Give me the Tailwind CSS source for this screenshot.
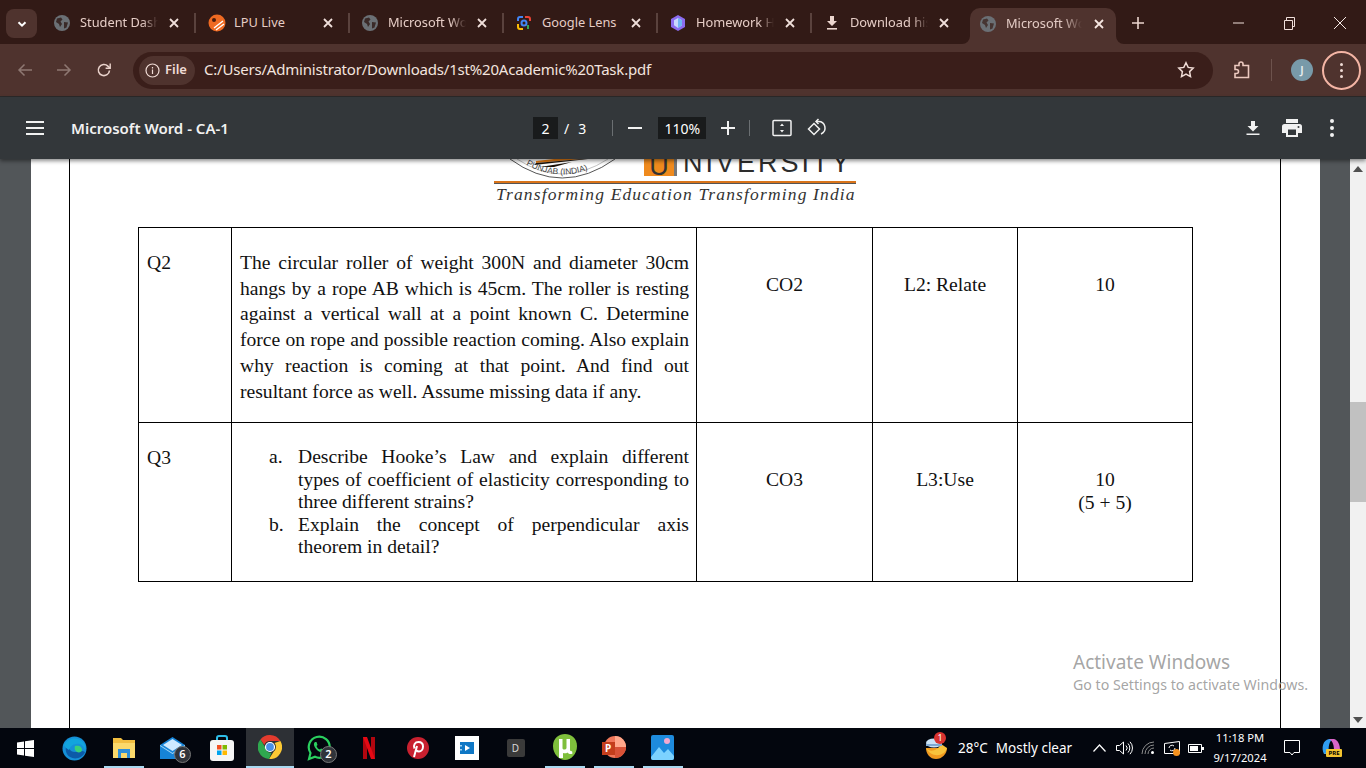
<!DOCTYPE html>
<html lang="en">
<head>
<meta charset="UTF-8">
<title>Microsoft Word - CA-1</title>
<script src="https://cdn.jsdelivr.net/npm/@tailwindcss/browser@4"></script>
</head>
<body class="w-[1366px] h-[768px] overflow-hidden flex flex-col bg-[#525659] font-['Noto_Sans',sans-serif]">

<!-- tab strip -->
<div class="h-[44px] shrink-0 bg-[#321a16] flex items-start text-[12.800px] text-[#e6cdc6] *:shrink-0">
  <div class="w-[31px] h-[29px] ml-[6px] mt-[9px] mr-[4px] rounded-lg bg-[#4f332e] flex items-center justify-center">
    <svg width="12" height="12" viewBox="0 0 12 12" fill="none" stroke="#fff" stroke-width="2"><path d="M2.500 4.200 6 7.700l3.500-3.500"/></svg>
  </div>

  <div class="w-[154px] h-[44px] flex items-center pl-[13px] pt-[2px] relative">
    <svg width="16" height="16" viewBox="0 0 16 16" class="shrink-0"><circle cx="8" cy="8" r="8" fill="#6b7075"/><path d="M3 3.500 7 2.500l1.500 2-2 2 1.500 2.500-2 3-1-3-3-2zM10 7l4 .5-1.500 5-2.500 1z" fill="#3a2a28"/></svg>
    <span class="ml-[10px] w-[78px] overflow-hidden whitespace-nowrap [mask-image:linear-gradient(90deg,#000_80%,transparent)]">Student Dashboard</span>
    <svg width="10" height="10" viewBox="0 0 10 10" class="ml-[11px]" stroke="#f0dfda" stroke-width="1.800"><path d="M1 1l8 8M9 1l-8 8"/></svg>
    <div class="absolute right-[-1px] top-[13px] w-[2px] h-[20px] bg-[#5a423d]"></div>
  </div>
  <div class="w-[154px] h-[44px] flex items-center pl-[13px] pt-[2px] relative">
    <svg width="18" height="18" viewBox="0 0 18 18" class="shrink-0"><circle cx="9" cy="9" r="8.500" fill="#ef6a22"/><path d="M6 14 15 7M8 16l8-6" stroke="#fff" stroke-width="1.400"/><circle cx="6" cy="6" r="2" fill="#4a1c0c"/></svg>
    <span class="ml-[8px] w-[89px] whitespace-nowrap">LPU Live</span>
    <svg width="10" height="10" viewBox="0 0 10 10" stroke="#f0dfda" stroke-width="1.800"><path d="M1 1l8 8M9 1l-8 8"/></svg>
    <div class="absolute right-[-1px] top-[13px] w-[2px] h-[20px] bg-[#5a423d]"></div>
  </div>
  <div class="w-[154px] h-[44px] flex items-center pl-[13px] pt-[2px] relative">
    <svg width="16" height="16" viewBox="0 0 16 16" class="shrink-0"><circle cx="8" cy="8" r="8" fill="#6b7075"/><path d="M3 3.500 7 2.500l1.500 2-2 2 1.500 2.500-2 3-1-3-3-2zM10 7l4 .5-1.500 5-2.500 1z" fill="#3a2a28"/></svg>
    <span class="ml-[10px] w-[78px] overflow-hidden whitespace-nowrap [mask-image:linear-gradient(90deg,#000_80%,transparent)]">Microsoft Word</span>
    <svg width="10" height="10" viewBox="0 0 10 10" class="ml-[11px]" stroke="#f0dfda" stroke-width="1.800"><path d="M1 1l8 8M9 1l-8 8"/></svg>
    <div class="absolute right-[-1px] top-[13px] w-[2px] h-[20px] bg-[#5a423d]"></div>
  </div>
  <div class="w-[154px] h-[44px] flex items-center pl-[13px] pt-[2px] relative">
    <svg width="16" height="16" viewBox="0 0 16 16" fill="none" stroke-width="2" class="shrink-0"><path d="M2 6V4a2 2 0 0 1 2-2h3" stroke="#4285f4"/><path d="M9 2h3a2 2 0 0 1 2 2v2" stroke="#ea4335"/><path d="M2 9v3a2 2 0 0 0 2 2h3" stroke="#fbbc04"/><path d="M12 10v4" stroke="#34a853"/><circle cx="8" cy="8" r="2.500" stroke="#4285f4"/></svg>
    <span class="ml-[10px] w-[89px] whitespace-nowrap">Google Lens</span>
    <svg width="10" height="10" viewBox="0 0 10 10" stroke="#f0dfda" stroke-width="1.800"><path d="M1 1l8 8M9 1l-8 8"/></svg>
    <div class="absolute right-[-1px] top-[13px] w-[2px] h-[20px] bg-[#5a423d]"></div>
  </div>
  <div class="w-[154px] h-[44px] flex items-center pl-[13px] pt-[2px] relative">
    <svg width="16" height="16" viewBox="0 0 16 16" class="shrink-0"><path d="M8 0l7 4v8l-7 4-7-4V4z" fill="#8b6cf0"/><path d="M8 3l4 2.300v5L8 13l-4-2.700v-5z" fill="#c9d8ff"/><path d="M8 3v10l4-2.700v-5z" fill="#6fb6f5"/></svg>
    <span class="ml-[10px] w-[78px] overflow-hidden whitespace-nowrap [mask-image:linear-gradient(90deg,#000_80%,transparent)]">Homework Help</span>
    <svg width="10" height="10" viewBox="0 0 10 10" class="ml-[11px]" stroke="#f0dfda" stroke-width="1.800"><path d="M1 1l8 8M9 1l-8 8"/></svg>
    <div class="absolute right-[-1px] top-[13px] w-[2px] h-[20px] bg-[#5a423d]"></div>
  </div>
  <div class="w-[154px] h-[44px] flex items-center pl-[13px] pt-[2px]">
    <svg width="16" height="16" viewBox="0 0 16 16" fill="#ecd5ce" class="shrink-0"><path d="M6 1h4v5h3L8 11 3 6h3z"/><path d="M3 13h10v1.600H3z"/></svg>
    <span class="ml-[10px] w-[78px] overflow-hidden whitespace-nowrap [mask-image:linear-gradient(90deg,#000_80%,transparent)]">Download history</span>
    <svg width="10" height="10" viewBox="0 0 10 10" class="ml-[11px]" stroke="#f0dfda" stroke-width="1.800"><path d="M1 1l8 8M9 1l-8 8"/></svg>
  </div>
  <div class="relative w-[146px] h-[36px] mt-[8px] ml-[5px] rounded-t-[10px] bg-[#4f332e] flex items-center pl-[10px] pb-[4px] text-[#e3cbc4]">
    <svg width="8" height="8" viewBox="0 0 8 8" class="absolute left-[-8px] bottom-0"><path d="M8 0v8H0a8 8 0 0 0 8-8z" fill="#4f332e"/></svg>
    <svg width="8" height="8" viewBox="0 0 8 8" class="absolute right-[-8px] bottom-0"><path d="M0 0v8h8a8 8 0 0 1-8-8z" fill="#4f332e"/></svg>
    <svg width="16" height="16" viewBox="0 0 16 16" class="shrink-0"><circle cx="8" cy="8" r="8" fill="#6b7075"/><path d="M3 3.500 7 2.500l1.500 2-2 2 1.500 2.500-2 3-1-3-3-2zM10 7l4 .5-1.500 5-2.500 1z" fill="#463532"/></svg>
    <span class="ml-[10px] w-[76px] overflow-hidden whitespace-nowrap [mask-image:linear-gradient(90deg,#000_75%,transparent)]">Microsoft Word</span>
    <svg width="10" height="10" viewBox="0 0 10 10" class="ml-[12px]" stroke="#f6e6e1" stroke-width="1.800"><path d="M1 1l8 8M9 1l-8 8"/></svg>
  </div>
  <svg width="12" height="12" viewBox="0 0 12 12" class="ml-[16px] mt-[17px]" stroke="#ecd5ce" stroke-width="1.600"><path d="M6 0v12M0 6h12"/></svg>
  <div class="ml-auto h-[44px] flex items-center pt-[2px]">
    <svg width="12" height="12" viewBox="0 0 12 12"><path d="M1 6h11" stroke="#f0dfda" stroke-width="1"/></svg>
    <svg width="13" height="13" viewBox="0 0 13 13" fill="none" stroke="#f0dfda" class="ml-[39px]"><path d="M1.500 3.500h8v9h-8zM3.500 3.500v-3h8v9h-2"/></svg>
    <svg width="14" height="14" viewBox="0 0 14 14" class="ml-[37px] mr-[19px]" stroke="#f5e8e4" stroke-width="1"><path d="M1 1l12 12M13 1 1 13"/></svg>
  </div>
</div>

<!-- address bar -->
<div class="h-[52px] shrink-0 bg-[#4f332e] flex items-center text-[#e9d2cb]">
  <svg width="16" height="14" viewBox="0 0 16 14" fill="none" stroke="#8e7872" stroke-width="1.500" class="ml-[17px]"><path d="M15 7H2M7.500 1.500 2 7l5.500 5.500"/></svg>
  <svg width="16" height="14" viewBox="0 0 16 14" fill="none" stroke="#8e7872" stroke-width="1.500" class="ml-[23px]"><path d="M1 7h13M8.500 1.500 14 7l-5.500 5.500"/></svg>
  <svg width="16" height="16" viewBox="0 0 16 16" fill="none" stroke="#e9d2cb" stroke-width="1.600" class="ml-[24px]"><path d="M13.500 8.500a5.600 5.600 0 1 1-1.600-4.400L14 6"/><path d="M14.200 1.500V6.200H9.600" stroke-width="1.400"/></svg>
  <div class="ml-[21px] w-[1080px] h-[37px] rounded-full bg-[#3a1e1a] flex items-center pl-[6px]">
    <div class="w-[56px] h-[29px] rounded-full bg-[#4f332e] flex items-center pl-[6px] gap-[5px] text-[13px] font-semibold text-[#f0dcd6]">
      <svg width="15" height="15" viewBox="0 0 15 15" fill="none" stroke="#f0dcd6" stroke-width="1.200"><circle cx="7.500" cy="7.500" r="6.500"/><path d="M7.500 6.500v4.500M7.500 4v1.500"/></svg>
      <span>File</span>
    </div>
    <span class="ml-[9px] mb-[1px] text-[15px] text-[#f3e4df] whitespace-nowrap tracking-[-0.2px]">C:/Users/Administrator/Downloads/1st%20Academic%20Task.pdf</span>
    <svg width="18" height="18" viewBox="0 0 18 18" fill="none" stroke="#f0dcd6" stroke-width="1.500" class="ml-auto mr-[18px]"><path d="M9 1.800l2.200 4.600 5 .7-3.600 3.500.9 5L9 13.200l-4.500 2.400.9-5L1.800 7.100l5-.7z"/></svg>
  </div>
  <svg width="18" height="18" viewBox="0 0 18 18" fill="none" stroke="#ecc9bf" stroke-width="1.600" class="ml-[20px]"><path d="M2 4.500h4V3a2 2 0 0 1 4 0v1.500h5.500v12H2v-4h1.500a2 2 0 0 0 0-4H2z"/></svg>
  <div class="ml-[20px] w-px h-[22px] bg-[#6d534d]"></div>
  <div class="ml-[19px] w-[22px] h-[22px] rounded-full bg-[#789aa9] flex items-center justify-center text-[11px] font-semibold text-[#e8eef0]">J</div>
  <div class="ml-[9px] w-[39px] h-[39px] rounded-full border-2 border-[#f4b5a5] flex flex-col items-center justify-center gap-[3px]">
    <i class="block w-[3px] h-[3px] rounded-full bg-[#f0dcd6]"></i><i class="block w-[3px] h-[3px] rounded-full bg-[#f0dcd6]"></i><i class="block w-[3px] h-[3px] rounded-full bg-[#f0dcd6]"></i>
  </div>
</div>
<div class="h-px shrink-0 bg-[#2c2a2a]"></div>

<!-- pdf toolbar -->
<div class="relative z-10 h-[62px] shrink-0 bg-[#33373a] flex items-center text-white shadow-[0_2px_4px_rgba(0,0,0,0.45)]">
  <svg width="18" height="14" viewBox="0 0 18 14" fill="#f1f1f1" class="ml-[26px]"><path d="M0 0h18v2H0zM0 6h18v2H0zM0 12h18v2H0z"/></svg>
  <span class="ml-[27px] w-[462px] text-[15px] font-semibold text-[#f1f1f1]">Microsoft Word - CA-1</span>
  <div class="w-[25px] h-[22px] bg-[#191b1c] flex items-center justify-center text-[14px]">2</div>
  <span class="ml-[6px] text-[14px]">/</span>
  <span class="ml-[9px] text-[14px]">3</span>
  <div class="ml-[26px] w-px h-[16px] bg-[#6b6f72]"></div>
  <svg width="14" height="14" viewBox="0 0 14 14" fill="#f1f1f1" class="ml-[15px]"><path d="M0 6h14v2H0z"/></svg>
  <div class="ml-[16px] w-[48px] h-[22px] bg-[#191b1c] flex items-center justify-center text-[14px]">110%</div>
  <svg width="14" height="14" viewBox="0 0 14 14" fill="#f1f1f1" class="ml-[15px]"><path d="M6 0h2v6h6v2H8v6H6V8H0V6h6z"/></svg>
  <div class="ml-[14px] w-px h-[16px] bg-[#6b6f72]"></div>
  <svg width="20" height="18" viewBox="0 0 20 18" fill="none" stroke="#f1f1f1" stroke-width="1.500" class="ml-[22px]"><rect x="1" y="1.500" width="18" height="15" rx="1"/><path d="M10 4.500 8 7h4zM10 13.500 8 11h4z" fill="#f1f1f1" stroke="none"/></svg>
  <svg width="20" height="20" viewBox="0 0 20 20" fill="none" stroke="#f1f1f1" stroke-width="1.500" class="ml-[15px]"><path d="M1.500 11 7 5.500l5.500 5.500L7 16.500z"/><path d="M9 3.500h2.500a6.500 6.500 0 0 1 2.500 12.500"/><path d="M11.500 1 9 3.500 11.500 6"/></svg>
  <svg width="16" height="16" viewBox="0 0 16 16" fill="#f1f1f1" class="ml-[418px]"><path d="M6 1h4v5h3.500L8 11.500 2.500 6H6zM1.500 13.500h13V15h-13z"/></svg>
  <svg width="20" height="18" viewBox="0 0 20 18" class="ml-[21px]"><path d="M4 0h12v4H4zM2.500 5h15A2.500 2.500 0 0 1 20 7.500V14h-4v4H4v-4H0V7.500A2.500 2.500 0 0 1 2.500 5z" fill="#f1f1f1"/><path d="M6 10.500h8V16H6z" fill="#33373a"/><circle cx="16.500" cy="8" r="1" fill="#33373a"/></svg>
  <div class="ml-[28px] flex flex-col gap-[3px]"><i class="block w-[4px] h-[4px] rounded-full bg-[#f1f1f1]"></i><i class="block w-[4px] h-[4px] rounded-full bg-[#f1f1f1]"></i><i class="block w-[4px] h-[4px] rounded-full bg-[#f1f1f1]"></i></div>
</div>

<!-- pdf viewport -->
<div class="relative h-[569px] shrink-0 flex overflow-hidden bg-[#525659]">
  <div class="ml-[31px] w-[1289px] h-full bg-white pl-[38px]">
    <div class="w-[1212px] h-full border-x border-black pl-[68px]">
      <!-- letterhead, cut off by the toolbar -->
      <div class="relative h-[68px] overflow-hidden">
        <svg width="110" height="22" viewBox="0 0 110 22" class="absolute left-[372px] top-0">
          <defs><path id="sealArc" d="M10 2 Q52 29 96 2"/></defs>
          <path d="M0 0 Q52 38 105 0" fill="none" stroke="#555" stroke-width="1"/>
          <path d="M7 0 Q52 30 98 0" fill="none" stroke="#999" stroke-width="0.600"/>
          <path d="M26 4 72 0H44L26 2z" fill="#e97e13"/>
          <path d="M24 6 78 0H72L26 4zM30 8 62 3 44 8z" fill="#1b1108"/>
          <text font-size="8.500" fill="#444" font-family="Liberation Sans"><textPath href="#sealArc" startOffset="7">PUNJAB (INDIA)</textPath></text>
        </svg>
        <div class="absolute left-[506px] top-0 w-[33px] h-[17px] bg-[#ef8a1d] border-r-[3px] border-[#777] flex justify-center items-end overflow-hidden font-['Liberation_Sans',sans-serif] text-[27px] leading-[20px] text-[#333]">U</div>
        <span class="absolute left-[545px] top-[-6px] whitespace-nowrap font-['Liberation_Sans',sans-serif] text-[27px] leading-[20px] tracking-[3px] text-[#2d2d2d]">NIVERSITY</span>
        <div class="absolute left-[356px] top-[22px] w-[362px] h-[3px] bg-[#d9741a] border-b border-[#555]"></div>
        <div class="absolute left-[358px] top-[25px] whitespace-nowrap font-['Liberation_Serif',serif] italic text-[17.500px] leading-[20px] tracking-[1.150px] text-[#333]">Transforming Education Transforming India</div>
      </div>

      <table class="w-[1054px] table-fixed border-collapse border border-black font-['Liberation_Serif',serif] text-[19.600px] text-[#111]">
        <colgroup><col class="w-[93px]"><col class="w-[465px]"><col class="w-[176px]"><col class="w-[145px]"><col class="w-[175px]"></colgroup>
        <tr class="h-[195px] align-top">
          <td class="border border-black pl-[8px] pt-[22px] leading-[26px]">Q2</td>
          <td class="border border-black pl-[8px] pr-[7px] pt-[22px] leading-[25.700px]">
            <div class="[text-align-last:justify]">The circular roller of weight 300N and diameter 30cm</div>
            <div class="[text-align-last:justify]">hangs by a rope AB which is 45cm. The roller is resting</div>
            <div class="[text-align-last:justify]">against a vertical wall at a point known C. Determine</div>
            <div class="[text-align-last:justify]">force on rope and possible reaction coming. Also explain</div>
            <div class="[text-align-last:justify]">why reaction is coming at that point. And find out</div>
            <div>resultant force as well. Assume missing data if any.</div>
          </td>
          <td class="border border-black text-center pt-[44px] leading-[26px]">CO2</td>
          <td class="border border-black text-center pt-[44px] leading-[26px]">L2: Relate</td>
          <td class="border border-black text-center pt-[44px] leading-[26px]">10</td>
        </tr>
        <tr class="h-[159px] align-top">
          <td class="border border-black pl-[8px] pt-[22px] leading-[26px]">Q3</td>
          <td class="border border-black pr-[7px] pt-[23px] leading-[22.500px]">
            <div class="flex pl-[37px]"><span class="w-[29px] shrink-0">a.</span>
              <div class="flex-1">
                <div class="[text-align-last:justify]">Describe Hooke’s Law and explain different</div>
                <div class="[text-align-last:justify]">types of coefficient of elasticity corresponding to</div>
                <div>three different strains?</div>
              </div>
            </div>
            <div class="flex pl-[37px]"><span class="w-[29px] shrink-0">b.</span>
              <div class="flex-1">
                <div class="[text-align-last:justify]">Explain the concept of perpendicular axis</div>
                <div>theorem in detail?</div>
              </div>
            </div>
          </td>
          <td class="border border-black text-center pt-[45px] leading-[23px]">CO3</td>
          <td class="border border-black text-center pt-[45px] leading-[23px]">L3:Use</td>
          <td class="border border-black text-center pt-[45px] leading-[23px]">10<br>(5 + 5)</td>
        </tr>
      </table>
    </div>
  </div>

  <div class="ml-[30px] w-[16px] h-full bg-[#f1f1f1] flex flex-col items-center">
    <svg width="10" height="6" viewBox="0 0 10 6" class="mt-[7px]"><path d="M5 0l5 6H0z" fill="#505050"/></svg>
    <div class="mt-[230px] w-full h-[100px] bg-[#c1c1c1]"></div>
    <svg width="10" height="6" viewBox="0 0 10 6" class="mt-auto mb-[5px]"><path d="M5 6 0 0h10z" fill="#505050"/></svg>
  </div>

  <!-- activation watermark -->
  <div class="absolute left-[1073px] top-[494px] text-[#9a9a9a]/90 leading-none">
    <div class="text-[19px]">Activate Windows</div>
    <div class="mt-[6px] text-[14.200px]">Go to Settings to activate Windows.</div>
  </div>
</div>

<!-- taskbar -->
<div class="h-[40px] shrink-0 bg-[#03060e] flex items-stretch text-white *:shrink-0">
  <div class="w-[50px] flex items-center justify-center">
    <svg width="17" height="17" viewBox="0 0 17 17" fill="#fff"><path d="M0 2.500 7 1.500v6.500H0zM8 1.300 17 0v8H8zM0 9h7v6.500l-7-1zM8 9h9v8l-9-1.300z"/></svg>
  </div>
  <div class="w-[49px] flex items-center justify-center">
    <svg width="25" height="25" viewBox="0 0 25 25"><circle cx="12.500" cy="12.500" r="12" fill="#1590d8"/><path d="M23 16c-2 6-10 8-15 5C3 18 2 10 7 6c-2 5 1 10 6 10 4 0 7-2 10 0z" fill="#0c5aa8"/><path d="M13 10c3-1 7 0 7 4 0 2-3 3-5 2-2-1-3-4-2-6z" fill="#38d07a"/><path d="M2 9C5 2 15 0 21 6c2 2 3 5 2 8-1-4-5-7-9-6-3 0-6 3-7 6-2-1-4-3-5-5z" fill="#12a4de"/></svg>
  </div>
  <div class="w-[49px] flex items-end justify-center">
    <div class="w-[40px] h-full border-b-2 border-[#a8d8f0] flex items-center justify-center">
      <svg width="22" height="21" viewBox="0 0 22 21"><path d="M0 1h8l2 2h12v18H0z" fill="#f2be40"/><path d="M0 6h22v15H0z" fill="#fbd96b"/><path d="M5 12h12v9h-3v-5H8v5H5z" fill="#2f8fd8"/></svg>
    </div>
  </div>
  <div class="w-[49px] flex items-center justify-center relative">
    <svg width="25" height="22" viewBox="0 0 25 22"><path d="M0 8 12.500 0 25 8v14H0z" fill="#1684d8"/><path d="M0 8l12.500 8L25 8v1L12.500 17 0 9z" fill="#a8dcf8"/><path d="M3 8 12.500 2 22 8l-9.500 6z" fill="#cfeaff"/></svg>
    <div class="absolute left-[26px] top-[18px] w-[17px] h-[17px] rounded-full bg-[#30343a] border border-[#777] flex items-center justify-center text-[11px] font-semibold">6</div>
  </div>
  <div class="w-[49px] flex items-center justify-center">
    <svg width="24" height="26" viewBox="0 0 24 26"><path d="M7 6V3a2 2 0 0 1 2-2h6a2 2 0 0 1 2 2v3" fill="none" stroke="#2dbde8" stroke-width="2"/><rect y="5" width="24" height="21" rx="3" fill="#f5f5f5"/><path d="M7 10h4.500v4.500H7z" fill="#f25022"/><path d="M12.500 10H17v4.500h-4.500z" fill="#7fba00"/><path d="M7 15.500h4.500V20H7z" fill="#00a4ef"/><path d="M12.500 15.500H17V20h-4.500z" fill="#ffb900"/></svg>
  </div>
  <div class="w-[48px] bg-[#2d3035] border-b-2 border-[#a8d8f0] flex items-center justify-center">
    <svg width="24" height="24" viewBox="0 0 24 24"><path d="M12 0a12 12 0 0 1 10.400 6H12a6 6 0 0 0-5.700 4L2.400 4.500A12 12 0 0 1 12 0z" fill="#e33b2e"/><path d="M22.400 6A12 12 0 0 1 11 24l4.800-7.500A6 6 0 0 0 16.500 8z" fill="#fcc934"/><path d="M2.400 4.500 7 12a6 6 0 0 0 6.500 5.800L11 24A12 12 0 0 1 2.400 4.500z" fill="#2fa84f"/><circle cx="12" cy="12" r="4.500" fill="#4a90e8" stroke="#fff" stroke-width="1.200"/></svg>
  </div>
  <div class="w-[50px] flex items-center justify-center relative">
    <svg width="24" height="26" viewBox="0 0 24 26" fill="none"><path d="M2 24l1.500-6A10.500 10.500 0 1 1 8 21.800z" stroke="#2ad05f" stroke-width="2.200"/><path d="M8 7c-1.500 1-1.500 3 0 5.500s4 4.500 6 4.500c2 0 3-1.500 2.500-2.500l-2.500-1-1 1c-2-.5-3-2-3.500-3.500l1-1L9.500 7z" fill="#2ad05f"/></svg>
    <div class="absolute left-[26px] top-[18px] w-[17px] h-[17px] rounded-full bg-[#30343a] border border-[#777] flex items-center justify-center text-[11px] font-semibold">2</div>
  </div>
  <div class="w-[49px] flex items-center justify-center">
    <svg width="12" height="22" viewBox="0 0 12 22"><path d="M0 0h4v22H0z" fill="#b1060f"/><path d="M8 0h4v22H8z" fill="#b1060f"/><path d="M0 0h4l8 22H8z" fill="#e50914"/></svg>
  </div>
  <div class="w-[49px] flex items-center justify-center">
    <svg width="22" height="22" viewBox="0 0 22 22"><circle cx="11" cy="11" r="11" fill="#c8202f"/><path d="M7 20l3-11M7.500 11.500C6 8 8 5 11.500 5c3 0 4.500 2 4.500 4.500 0 3-2 5-4 5-1.500 0-2.500-1-2.500-1" fill="none" stroke="#fff" stroke-width="2"/></svg>
  </div>
  <div class="w-[49px] flex items-center justify-center">
    <svg width="24" height="24" viewBox="0 0 24 24"><path d="M0 0h24v24H0z" fill="#fff"/><path d="M5 6h14v12H5z" fill="#0f77c5"/><path d="M10 9l5 3-5 3z" fill="#fff"/><path d="M5 9h2v1.500H5zM5 13h2v1.500H5z" fill="#9fd4f5"/></svg>
  </div>
  <div class="w-[49px] flex items-center justify-center">
    <div class="w-[18px] h-[18px] rounded-[2px] bg-[#3a3a3a] flex items-center justify-center text-[10px] text-[#d8d8d8]">D</div>
  </div>
  <div class="w-[49px] flex items-center justify-center">
    <div class="w-[40px] h-full border-b-2 border-[#a8d8f0] flex items-center justify-center">
      <svg width="24" height="26" viewBox="0 0 24 26"><path d="M12 0C18 0 24 4 24 12c0 8-6 14-12 14S0 20 0 12C0 4 6 0 12 0z" fill="#7fbf3c"/><path d="M6 5h3.500v9c0 2 3.500 2 4 0V5H17v11c0 1 1 1.500 2 1l.5 2.500c-2 1-4 .5-5-1-1.500 1-3 1-4.500.5V24H6z" fill="#fff"/></svg>
    </div>
  </div>
  <div class="w-[49px] flex items-center justify-center">
    <div class="w-[40px] h-full border-b-2 border-[#a8d8f0] flex items-center justify-center relative">
      <svg width="24" height="24" viewBox="0 0 24 24"><circle cx="13" cy="12" r="11" fill="#f0775a"/><path d="M13 1a11 11 0 0 1 11 11H13z" fill="#ffa78a"/><path d="M13 12h11a11 11 0 0 1-11 11z" fill="#d85237"/></svg>
      <div class="absolute left-[8px] top-[14px] w-[13px] h-[13px] bg-[#c43e1c] text-[10px] font-bold leading-[13px] text-center">P</div>
    </div>
  </div>
  <div class="w-[49px] flex items-center justify-center">
    <div class="w-[40px] h-full border-b-2 border-[#a8d8f0] flex items-center justify-center">
      <svg width="23" height="25" viewBox="0 0 23 25"><rect width="23" height="25" rx="2" fill="#1e8bdd"/><path d="M0 22l8-10 5 6 4-4 6 7v2a2 2 0 0 1-2 2H2a2 2 0 0 1-2-2z" fill="#7cd2ff"/><circle cx="16" cy="6" r="3" fill="#f4a9d0"/></svg>
    </div>
  </div>

  <!-- system tray -->
  <div class="relative ml-[234px] w-[32px] flex items-center justify-center">
    <svg width="24" height="26" viewBox="0 0 24 26"><path d="M1 13h21c0 6-5 11-11 11S1 19 1 13z" fill="#f19a1f"/><path d="M1 13c3 4 11 4 15-4l6 4c-2 8-15 11-21 0z" fill="#f8c33c"/><ellipse cx="9" cy="8" rx="8" ry="4.500" fill="#c9e2f6"/><path d="M1 9h16v2H1z" fill="#7fa9d2"/></svg>
    <div class="absolute left-[13px] top-[4px] w-[12px] h-[12px] rounded-full bg-[#d9332f] text-[9px] leading-[12px] text-center">1</div>
  </div>
  <div class="ml-[5px] w-[118px] flex items-center text-[13.500px] whitespace-nowrap">28°C<span class="ml-[8px]">Mostly clear</span></div>
  <svg width="13" height="8" viewBox="0 0 13 8" fill="none" stroke="#fff" stroke-width="1.200" class="ml-[17px] self-center"><path d="M.5 7.500 6.500 1l6 6.500"/></svg>
  <svg width="17" height="14" viewBox="0 0 17 14" fill="none" stroke="#fff" class="ml-[10px] self-center"><path d="M.5 4.500h3L7.500 1v12l-4-3.500h-3zM10 4.500a3.500 3.500 0 0 1 0 5M12 2.500a6.500 6.500 0 0 1 0 9M14 .8a9 9 0 0 1 0 12.400"/></svg>
  <svg width="16" height="14" viewBox="0 0 16 14" fill="none" stroke="#8c8c8c" class="ml-[8px] self-center"><path d="M1 13a12 12 0 0 1 12-12M4 13a9 9 0 0 1 9-9M7 13a6 6 0 0 1 6-6"/><circle cx="11.500" cy="11.500" r="1.500" fill="#fff" stroke="none"/></svg>
  <div class="relative ml-[7px] self-center w-[16px] h-[14px]">
    <svg width="16" height="14" viewBox="0 0 16 14" fill="none" stroke="#fff"><path d="M.5 2.500 15.500.5v12H.5z"/><path d="M5 7a3 3 0 0 1 5-2M11 7a3 3 0 0 1-5 2"/></svg>
    <div class="absolute left-[9px] top-[8px] w-[7px] h-[7px] rounded-full bg-[#f6921e]"></div>
  </div>
  <svg width="16" height="9" viewBox="0 0 16 9" class="ml-[8px] self-center"><path d="M.5.500h13v8H.5z" fill="none" stroke="#fff"/><path d="M2 2h8v5H2z" fill="#fff"/><path d="M14 3h2v3h-2z" fill="#fff"/></svg>
  <div class="ml-[2px] w-[68px] flex flex-col items-center justify-center text-[11.200px] leading-[20px]">
    <span>11:18 PM</span><span>9/17/2024</span>
  </div>
  <svg width="16" height="16" viewBox="0 0 16 16" fill="none" stroke="#fff" class="ml-[10px] self-center"><path d="M.5.500h15v12H10L8 15l-2-2.500H.5z"/></svg>
  <div class="relative ml-[21px] self-center w-[20px] h-[20px]">
    <svg width="20" height="20" viewBox="0 0 20 20"><path d="M3 16C0 10 2 2 8 1h5c-5 1-6 8-5 15z" fill="#2f9cf0"/><path d="M8 1h5c4 1 6 6 6 11h-6c0-4-1-9-5-11z" fill="#d865c8"/><path d="M3 16h12c3 0 4-2 4-4-2 1-4 1-6 0-1 2-3 3-5 3z" fill="#f6c945"/></svg>
    <div class="absolute left-[5px] top-[11px] w-[16px] h-[8px] rounded-[1px] bg-[#f4c430] text-[6px] leading-[8px] font-bold text-center text-black">PRE</div>
  </div>
</div>
</body>
</html>
